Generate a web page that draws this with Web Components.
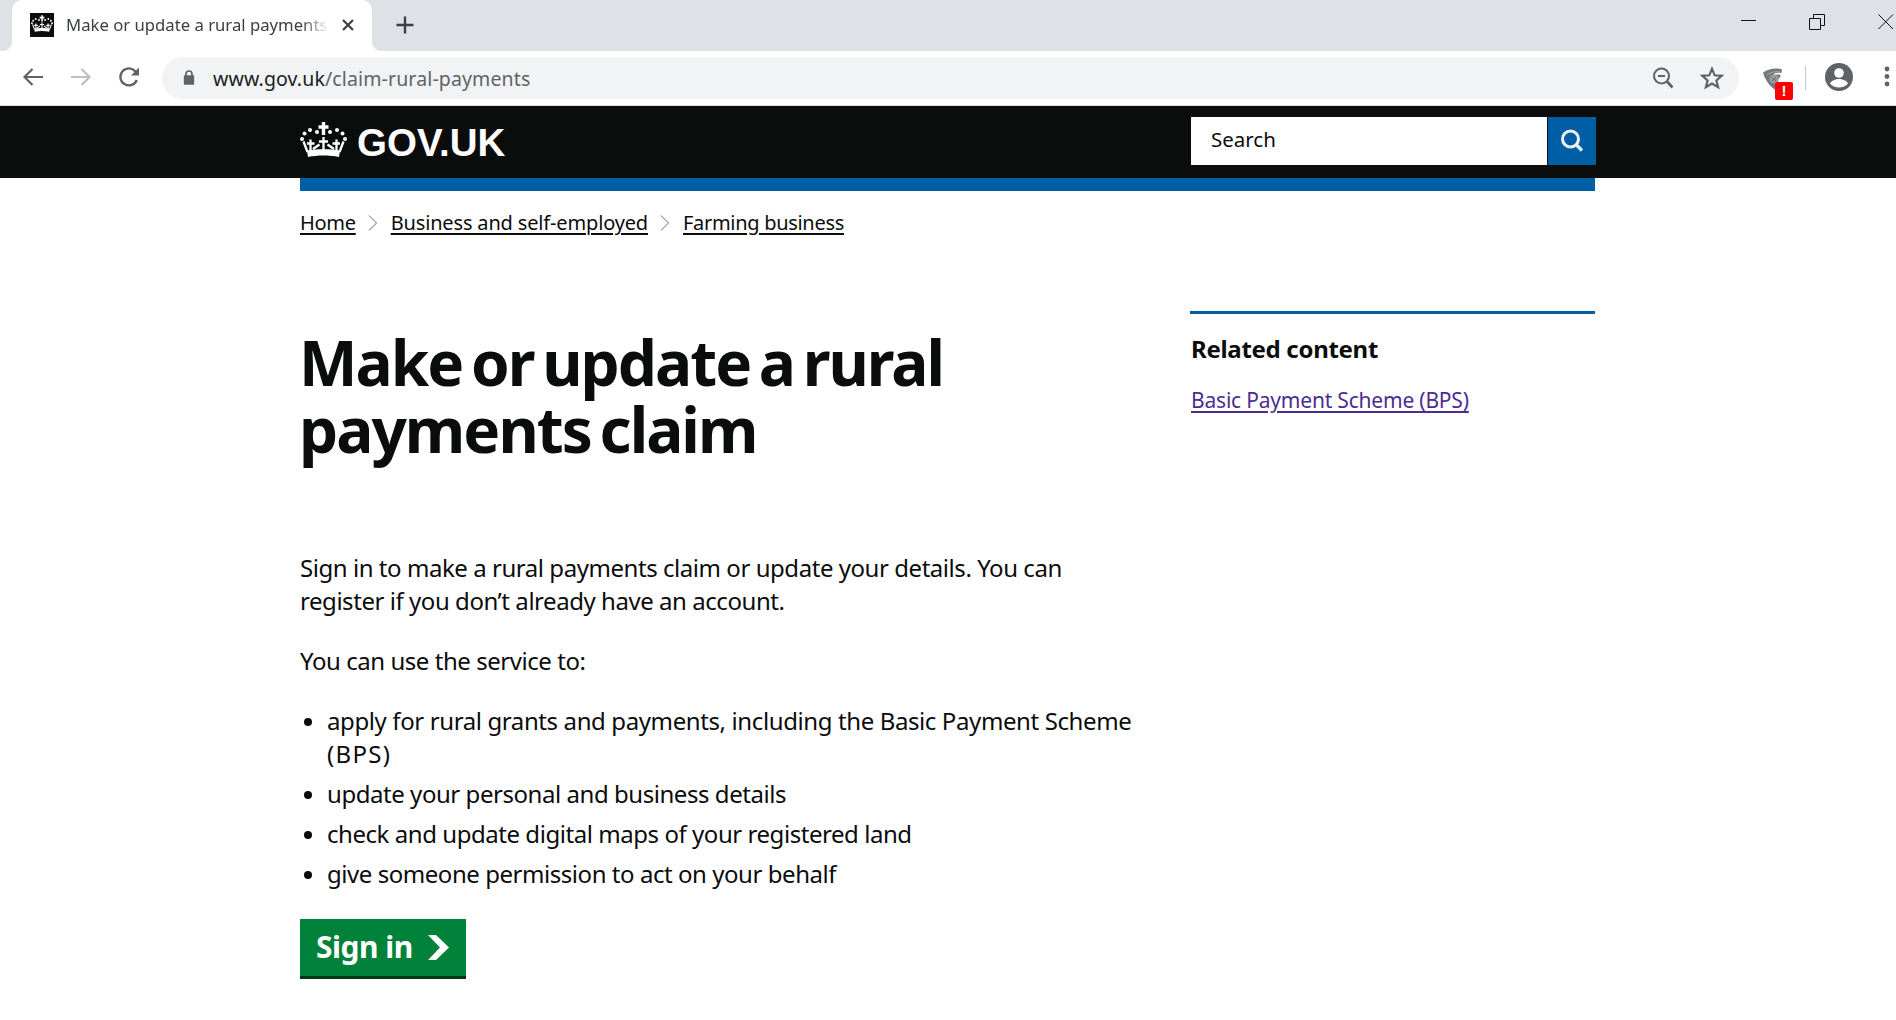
<!DOCTYPE html>
<html lang="en"><head><meta charset="utf-8"><title>Make or update a rural payments claim</title>
<style>
html,body{margin:0;padding:0;background:#fff;overflow:hidden;height:1020px}
body{font-family:"Noto Sans","Liberation Sans",sans-serif;color:#0b0c0c}
</style></head><body>
<browser-chrome></browser-chrome>
<gov-header></gov-header>
<page-width>
  <gov-breadcrumbs></gov-breadcrumbs>
  <two-col>
    <main-content slot="main"></main-content>
    <related-content slot="side"></related-content>
  </two-col>
</page-width>
<script>
const crown=(c)=>`<g fill="${c}"><path d="M21.800 0h3.400v3.300h3.300v3.400h-3.300V13h-3.400V6.700h-3.300V3.300h3.300z"/><circle cx="17" cy="10" r="2"/><circle cx="10" cy="8" r="2"/><circle cx="4.500" cy="11.500" r="2"/><circle cx="2" cy="17" r="2"/><circle cx="30" cy="10" r="2"/><circle cx="37" cy="8" r="2"/><circle cx="42.500" cy="11.500" r="2"/><circle cx="45" cy="17" r="2"/><path d="M7 28.500C16 26.800 31 26.800 40 28.500L39 35C30 33 17 33 8 35z"/></g><g stroke="${c}" fill="none" stroke-width="2.300"><path d="M23.500 15V28M19 19.500H28M10.500 17.500V28.500M7 21.500H14.500M36.500 17.500V28.500M32.500 21.500H40M3.500 19.500 7.500 30M43.500 19.500 39.500 30M13 27 19.500 22.500M34 27 27.500 22.500"/></g>`;
function def(name,css,html){customElements.define(name,class extends HTMLElement{constructor(){super();this.attachShadow({mode:'open'}).innerHTML=`<style>${css}</style>${html}`}})}

def('browser-chrome',`
:host{display:block;font-family:"Noto Sans","Open Sans",sans-serif;height:106px}
.strip{height:51px;background:#dee1e6;display:flex;align-items:stretch}
.tab{width:360px;margin-left:12px;background:#fff;border-radius:10px 10px 0 0;display:flex;align-items:center;padding:0 0 0 18px;box-sizing:border-box;position:relative}
.tab::before,.tab::after{content:"";position:absolute;bottom:0;width:10px;height:10px}
.tab::before{left:-10px;background:radial-gradient(circle at 0 0,transparent 10px,#fff 10.500px)}
.tab::after{right:-10px;background:radial-gradient(circle at 100% 0,transparent 10px,#fff 10.500px)}
.fav{width:24px;height:24px;background:#0b0c0c;flex:none;display:flex;justify-content:center;padding-top:2px;box-sizing:border-box;margin-top:-2px}
.title{flex:none;width:263px;margin-left:12px;overflow:hidden;white-space:nowrap;font-size:16.700px;line-height:24px;color:#3c4043;margin-top:-1px;-webkit-mask-image:linear-gradient(90deg,#000 235px,transparent 263px);mask-image:linear-gradient(90deg,#000 235px,transparent 263px)}
.x{flex:none;margin-left:12px;display:flex;margin-top:-1px}
.plus{margin-left:24px;display:flex;align-items:center;margin-top:-1px}
.win{margin-left:auto;display:flex}
.bar{height:54px;background:#fff;border-bottom:1px solid #dadce0;display:flex;align-items:center}
.nav{display:flex;width:162px;flex:none;align-items:center;padding:0 0 2px 22px;box-sizing:border-box;gap:26px}
.omni{width:1577px;height:42px;flex:none;background:#f1f3f4;border-radius:21px;display:flex;align-items:center;box-sizing:border-box;padding-left:21px}
.url{font-size:19.500px;color:#5f6368;margin-left:18px;white-space:nowrap;letter-spacing:.13px}
.url b{font-weight:400;color:#202124}
.oi{margin-left:auto;display:flex;gap:26px;align-items:center;padding-right:15px}
.ext{flex:none;margin-left:23px;width:36px;height:36px;position:relative}
.badge{position:absolute;left:13px;top:22px;width:18px;height:18px;background:#f00;border-radius:2px;color:#fff;font:700 15px/18px "Liberation Sans",sans-serif;text-align:center}
.sep{flex:none;width:1px;height:24px;background:#c6c8cb;margin-left:7px}
.acct{flex:none;margin-left:19px;display:flex;margin-top:-2px}
.dots{flex:none;margin-left:31px;display:flex;margin-top:-2px}
`,`
<div class="strip">
  <div class="tab">
    <span class="fav"><svg width="22" height="17" viewBox="0 0 47 35">${crown('#fff')}</svg></span>
    <span class="title">Make or update a rural payments claim</span>
    <span class="x"><svg width="14" height="14" viewBox="0 0 14 14"><path d="M2 2 12 12M12 2 2 12" stroke="#3c4043" stroke-width="2.200" fill="none"/></svg></span>
  </div>
  <span class="plus"><svg width="18" height="18" viewBox="0 0 18 18"><path d="M9 .5V17.500M.5 9H17.500" stroke="#3c4043" stroke-width="2.400"/></svg></span>
  <div class="win">
    <svg width="155" height="51" viewBox="0 0 155 51" style="display:block"><path d="M0 20.500H15M68.500 18.500H79.500V29.500H68.500zM72.500 18.500V14.500H83.500V25.500H79.500M137.500 14.500 152 29M152 14.500 137.500 29" fill="none" stroke="#111" stroke-width="1"/></svg>
  </div>
</div>
<div class="bar">
  <div class="nav">
    <svg width="22" height="22" viewBox="0 0 22 22"><path d="M21 11H2.500M10.500 3 2.500 11 10.500 19" fill="none" stroke="#5f6368" stroke-width="2.200"/></svg>
    <svg width="22" height="22" viewBox="0 0 22 22"><path d="M1 11H19.500M11.500 3 19.500 11 11.500 19" fill="none" stroke="#bcbec1" stroke-width="2.200"/></svg>
    <svg width="22" height="22" viewBox="0 0 22 22"><path d="M18.800 14A8.500 8.500 0 1 1 16.800 4.800L20 8" fill="none" stroke="#5f6368" stroke-width="2.300"/><path d="M21 1.500V9.500H13z" fill="#5f6368"/></svg>
  </div>
  <div class="omni">
    <svg width="12" height="16" viewBox="0 0 14 18" style="margin-top:-2px"><path d="M2.500 7V5.500a4.500 4.500 0 0 1 9 0V7h.7c.6 0 .8.300.8.800v9.400c0 .5-.2.800-.8.800H1.800c-.6 0-.8-.3-.8-.8V7.800c0-.5.200-.8.800-.8zM4.500 7h5V5.500a2.500 2.500 0 0 0-5 0z" fill="#5f6368"/></svg>
    <span class="url"><b>www.gov.uk</b>/claim-rural-payments</span>
    <span class="oi">
      <svg width="22" height="22" viewBox="0 0 22 22"><circle cx="9.500" cy="9" r="7.500" fill="none" stroke="#5f6368" stroke-width="2"/><path d="M15 14.500 20.500 20.500" stroke="#5f6368" stroke-width="2.600"/><path d="M6 9H13" stroke="#5f6368" stroke-width="2"/></svg>
      <svg width="24" height="24" viewBox="0 0 24 24"><path d="M12 2.800 14.700 9.300 21.800 9.800 16.400 14.400 18.100 21.200 12 17.500 5.900 21.200 7.600 14.400 2.200 9.800 9.300 9.300z" fill="none" stroke="#5f6368" stroke-width="2.200"/></svg>
    </span>
  </div>
  <div class="ext">
    <svg width="22" height="24" viewBox="0 0 22 24" style="position:absolute;left:0;top:7px"><path d="M1 5.500C7 1.500 14 .5 20 2.500L19.500 6C14 5 11 6.500 12 8c3-1 6-.5 7 .5L16 13c1 3-.5 6-1.500 10.500C8 20 3 13 1 5.500z" fill="#76797c"/><path d="M5 7.500C9 5 14 4.300 18 5" fill="none" stroke="#a8aaad" stroke-width="1"/><circle cx="12" cy="12" r="4.500" fill="#9a9c9f"/><path d="M9.500 10.500 14 14M14 10 10 14" stroke="#6a6d70" stroke-width="1"/></svg>
    <span class="badge">!</span>
  </div>
  <span class="sep"></span>
  <span class="acct"><svg width="28" height="28" viewBox="0 0 28 28"><circle cx="14" cy="14" r="14" fill="#5f6368"/><circle cx="14" cy="10" r="4.800" fill="#fff"/><path d="M5 20.500c1.500-3 5.500-4.500 9-4.500s7.500 1.500 9 4.500c-2 2.500-5.500 4-9 4s-7-1.500-9-4z" fill="#fff"/></svg></span>
  <span class="dots"><svg width="6" height="22" viewBox="0 0 6 22" style="display:block"><circle cx="3" cy="3" r="2.400" fill="#5f6368"/><circle cx="3" cy="10.500" r="2.400" fill="#5f6368"/><circle cx="3" cy="18" r="2.400" fill="#5f6368"/></svg></span>
</div>
`);

def('gov-header',`
:host{display:block;background:#0b0c0c;height:72px}
.in{width:1296px;margin-left:300px;display:flex;align-items:flex-start;justify-content:space-between}
.logo{display:flex;align-items:flex-start;gap:10px;margin-top:16px;color:#fff;font:700 38.500px/40px "Liberation Sans",Arial,sans-serif;letter-spacing:0}
.logo span{margin-top:1px}
.logo svg{display:block}
form{display:flex;height:48px;margin:11px 0 0}
.inp{width:356px;margin-right:1px;background:#fff;box-sizing:border-box;padding-left:20px;font:400 20.500px/45px "Noto Sans",sans-serif;color:#0b0c0c}
.btn{width:48px;background:#005ea5;display:flex;align-items:center;justify-content:center}
`,`<div class="in"><div class="logo"><svg width="47" height="35" viewBox="0 0 47 35">${crown('#fff')}</svg><span>GOV.UK</span></div>
<form><div class="inp">Search</div><div class="btn"><svg width="26" height="26" viewBox="0 0 26 26"><circle cx="11.500" cy="11" r="8" fill="none" stroke="#e8f0f5" stroke-width="3"/><path d="M17 16.500 23 22.500" stroke="#e8f0f5" stroke-width="3.400"/></svg></div></form></div>`);

def('page-width',`:host{display:block;width:1295px;margin-left:300px}.rule{height:13px;background:#005ea5}`,`<div class="rule"></div><slot></slot>`);

def('gov-breadcrumbs',`
:host{display:block;padding-top:18px;height:102px;font-size:20px;line-height:27px}
ol{list-style:none;margin:0;padding:0;display:flex;align-items:center}
a{color:#0b0c0c;text-decoration:underline;text-underline-offset:3px;text-decoration-thickness:2px;letter-spacing:-.3px}
a.w{letter-spacing:-.16px}
li{display:flex;align-items:center}
svg{margin:0 13px 0 12px;display:block}
`,`<ol><li><a>Home</a></li><li><svg width="10" height="18" viewBox="0 0 10 18"><path d="M1 1.500 8.500 9 1 16.500" fill="none" stroke="#626a6e" stroke-width="1"/></svg><a class="w">Business and self-employed</a></li><li><svg width="10" height="18" viewBox="0 0 10 18"><path d="M1 1.500 8.500 9 1 16.500" fill="none" stroke="#626a6e" stroke-width="1"/></svg><a>Farming business</a></li></ol>`);

def('two-col',`:host{display:block}.g{display:grid;grid-template-columns:1fr 405px;gap:0}`,`<div class="g"><slot name="main"></slot><slot name="side"></slot></div>`);

def('main-content',`
:host{display:block;font-size:24px;line-height:33px;letter-spacing:-.45px}
h1{margin:0 0 88px -1px;width:720px;padding-top:18px;font-size:62px;line-height:67px;font-weight:700;letter-spacing:-1.950px;word-spacing:-5.500px}
p{margin:0 0 27px;width:800px}
ul{margin:0 0 27px;padding:0 0 0 27px;width:830px}
li{margin-bottom:7px}
li::marker{font-size:22px}
li.f{letter-spacing:-.39px}
li.f span{letter-spacing:1.300px}
a.b{display:inline-flex;align-items:center;background:#00823b;color:#fff;font-weight:700;font-size:30px;line-height:37px;height:60px;padding:0 17px 5px 16px;box-sizing:border-box;box-shadow:inset 0 -3px 0 #003618;letter-spacing:-.5px;margin-top:2px}
a.b svg{margin:2px 0 0 15px;display:block}
`,`<h1>Make or update a rural payments claim</h1>
<p>Sign in to make a rural payments claim or update your details. You can register if you don’t already have an account.</p>
<p>You can use the service to:</p>
<ul><li class="f">apply for rural grants and payments, including the Basic Payment Scheme <span>(BPS)</span></li><li>update your personal and business details</li><li>check and update digital maps of your registered land</li><li>give someone permission to act on your behalf</li></ul>
<a class="b">Sign in<svg width="21" height="25" viewBox="0 0 21 25"><path d="M0 0H8L21 12.500 8 25H0L12 12.500z" fill="#fff"/></svg></a>`);

def('related-content',`
:host{display:block;font-size:21px}
.t{border-top:3px solid #005ea5;padding:20px 0 0 1px}
h2{margin:0 0 22px;font-size:24px;line-height:30px;font-weight:700;letter-spacing:-.3px}
a{color:#4c2c92;text-decoration:underline;text-underline-offset:3px;letter-spacing:-.2px;line-height:27px}
`,`<div class="t"><h2>Related content</h2><a>Basic Payment Scheme (BPS)</a></div>`);
</script>
</body></html>
